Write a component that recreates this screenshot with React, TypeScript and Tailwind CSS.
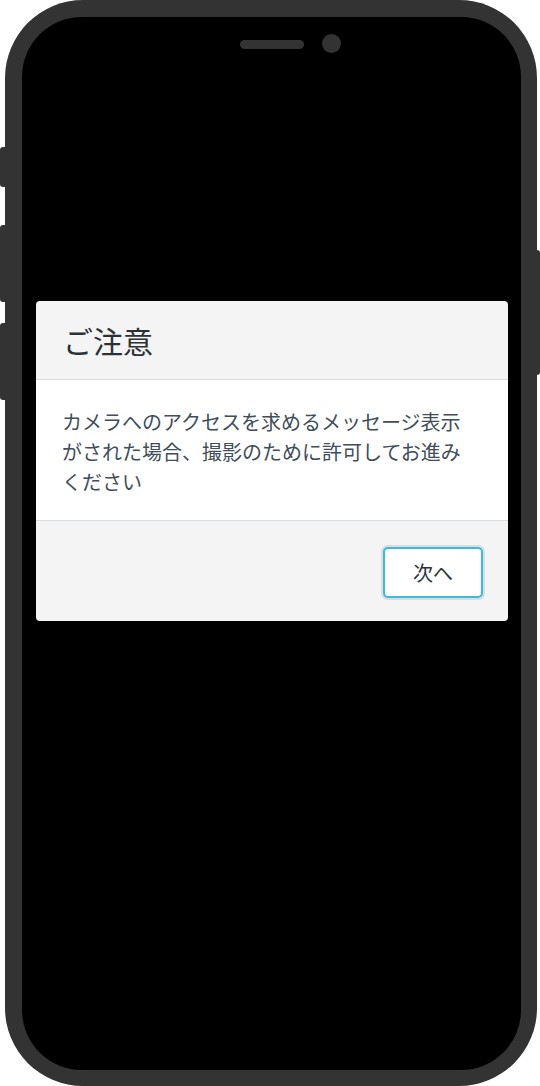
import React from "react";

export default function App() {
  return (
    <div className="relative w-[540px] h-[1086px] bg-white overflow-hidden" style={{ fontFamily: '"Noto Sans CJK JP", "Noto Sans", sans-serif' }}>
      {/* side buttons */}
      <div className="absolute left-0 top-[147px] w-[8px] h-[40px] rounded-l-[3px] bg-[#333333]" />
      <div className="absolute left-0 top-[225px] w-[8px] h-[77px] rounded-l-[3px] bg-[#333333]" />
      <div className="absolute left-0 top-[323px] w-[8px] h-[77px] rounded-l-[3px] bg-[#333333]" />
      <div className="absolute right-0 top-[250px] w-[8px] h-[125px] rounded-r-[3px] bg-[#333333]" />

      {/* phone frame */}
      <div className="relative ml-[5px] w-[532px] h-[1086px] rounded-[78px] bg-[#333333] pt-[17px] pl-[17px] pr-[16px] pb-[16px]">
        <div className="w-full h-full rounded-[60px] bg-black flex flex-col">
          {/* notch */}
          <div className="flex justify-center pt-[23px]">
            <div className="relative">
              <div className="w-[64px] h-[9px] rounded-full bg-[#333333]" />
              <div className="absolute left-[82px] top-[-6px] w-[19px] h-[19px] rounded-full bg-[#333333]" />
            </div>
          </div>

          {/* dialog */}
          <div className="mt-[252px] ml-[14px] mr-[13px] rounded-[4px] overflow-hidden">
            <div className="h-[79px] bg-[#f4f4f4] border-b border-[#d6dde2] flex items-center pl-[27px]">
              <span className="text-[30px] leading-none text-[#2c3136]">ご注意</span>
            </div>
            <div className="bg-white pl-[26px] pr-[44px] pt-[27px] pb-[23px] border-b border-[#d6dde2]">
              <p className="text-[20px] leading-[30px] text-[#414d5a]">
                カメラへのアクセスを求めるメッセージ表示がされた場合、撮影のために許可してお進みください
              </p>
            </div>
            <div className="bg-[#f4f4f4] h-[100px] flex justify-end items-start pt-[26px] pr-[25px]">
              <button className="w-[100px] h-[51px] bg-white rounded-[5px] border-2 border-[#3cbcdc] shadow-[0_0_0_2px_#d8dde0] text-[20px] leading-none text-[#2c3136] flex items-center justify-center">
                次へ
              </button>
            </div>
          </div>
        </div>
      </div>
    </div>
  );
}
